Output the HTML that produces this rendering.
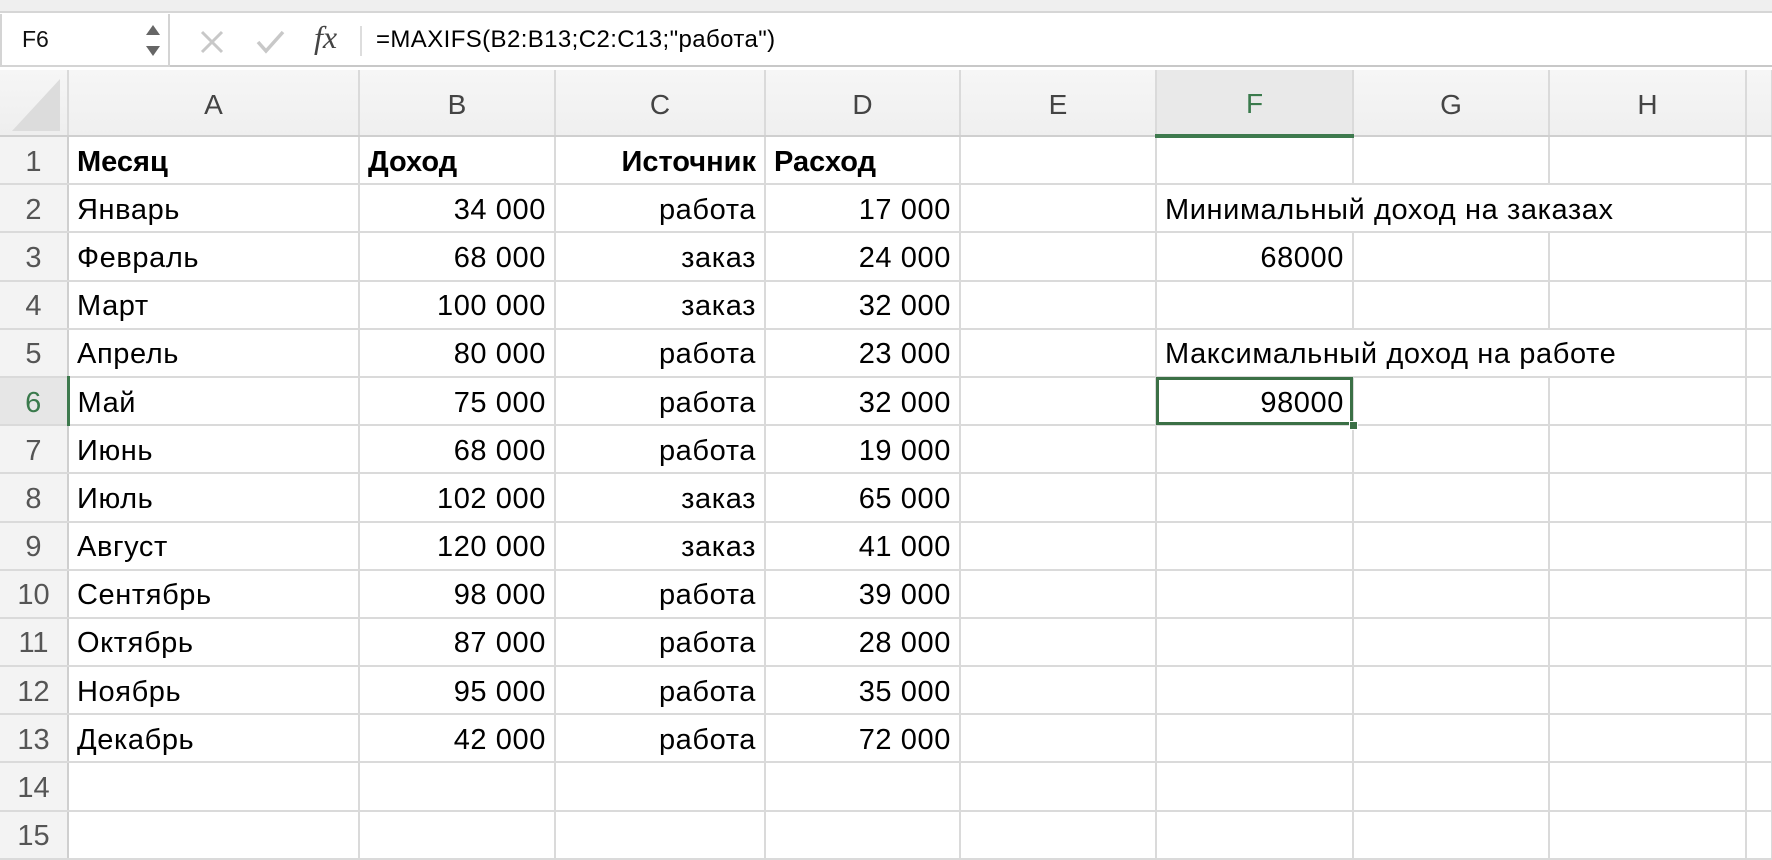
<!DOCTYPE html>
<html><head><meta charset="utf-8"><style>
*{margin:0;padding:0;box-sizing:border-box}
body{width:1772px;height:828px;overflow:hidden;background:#fff;font-family:"Liberation Sans",sans-serif;position:relative}
.top{position:absolute;left:0;top:0;width:1772px;height:13px;background:#efefef;border-bottom:2px solid #d6d6d6}
.fbar{position:absolute;left:0;top:14px;width:1772px;height:53px;background:#fff;border-bottom:2px solid #c8c8c8}
.name{position:absolute;left:0;top:0;width:170px;height:53px;border:2px solid #d4d4d4;border-top:none;font-size:23px;padding:12px 0 0 20px;color:#111}
table{position:absolute;left:0;top:70px;width:1772px;border-collapse:collapse;table-layout:fixed}
td{border-right:2px solid #dadada;border-bottom:2px solid #dadada;height:48.2px;font-size:29px;letter-spacing:0.6px;white-space:nowrap;overflow:visible;padding:0 8px;color:#000;vertical-align:middle;padding-top:4px}
tr.h td{height:66px;background:linear-gradient(#f6f6f6,#efefef);text-align:center;color:#444;font-size:28px;letter-spacing:0;border-bottom:2px solid #cfcfcf}
td.rh{background:#f3f3f3;text-align:center;color:#555;padding:4px 0 0 0;border-right:2px solid #cfcfcf;letter-spacing:0}
.r{text-align:right}
.b{font-weight:bold;letter-spacing:0}
</style></head><body>
<div class="top"></div>
<div class="fbar">
<div class="name">F6</div>
<svg style="position:absolute;left:145px;top:10px" width="16" height="34"><path d="M1 11 L8 1 L15 11Z" fill="#666"/><path d="M1 22 L15 22 L8 32Z" fill="#666"/></svg>
<svg style="position:absolute;left:200px;top:16px" width="24" height="24"><path d="M2 2 L22 22 M22 2 L2 22" stroke="#c8c8c8" stroke-width="3"/></svg>
<svg style="position:absolute;left:256px;top:16px" width="30" height="24"><path d="M2 12 L10 21 L27 2" stroke="#c8c8c8" stroke-width="3.5" fill="none"/></svg>
<div style="position:absolute;left:314px;top:5px;font-family:'Liberation Serif',serif;font-style:italic;font-size:32px;color:#444">fx</div>
<div style="position:absolute;left:360px;top:12px;width:2px;height:30px;background:#ddd"></div>
<div style="position:absolute;left:376px;top:12px;font-size:24px;letter-spacing:0.4px;color:#000">=MAXIFS(B2:B13;C2:C13;"работа")</div>
</div>
<table>
<colgroup><col style="width:68px"><col style="width:291px"><col style="width:196px"><col style="width:210px"><col style="width:195px"><col style="width:196px"><col style="width:197px"><col style="width:196px"><col style="width:197px"><col style="width:26px"></colgroup>
<tr class="h"><td style="background:linear-gradient(#f6f6f6,#eee);padding:0"><svg width="52" height="56" style="display:block;margin:4px 0 0 10px"><path d="M50 2 L50 54 L2 54Z" fill="#dcdcdc"/></svg></td><td>A</td><td>B</td><td>C</td><td>D</td><td>E</td><td style="background:#e9e9e9;color:#3a7a4c;border-bottom:4px solid #3e7a4e">F</td><td>G</td><td>H</td><td></td></tr>
<tr><td class="rh">1</td><td class="b">Месяц</td><td class="b">Доход</td><td class="b r">Источник</td><td class="b">Расход</td><td></td><td></td><td></td><td></td><td></td></tr>
<tr><td class="rh">2</td><td>Январь</td><td class="r">34 000</td><td class="r">работа</td><td class="r">17 000</td><td></td><td colspan="3">Минимальный доход на заказах</td><td></td></tr>
<tr><td class="rh">3</td><td>Февраль</td><td class="r">68 000</td><td class="r">заказ</td><td class="r">24 000</td><td></td><td class="r">68000</td><td></td><td></td><td></td></tr>
<tr><td class="rh">4</td><td>Март</td><td class="r">100 000</td><td class="r">заказ</td><td class="r">32 000</td><td></td><td></td><td></td><td></td><td></td></tr>
<tr><td class="rh">5</td><td>Апрель</td><td class="r">80 000</td><td class="r">работа</td><td class="r">23 000</td><td></td><td colspan="3">Максимальный доход на работе</td><td></td></tr>
<tr><td class="rh" style="background:#e6e6e6;color:#3a7a4c;border-right:3px solid #3e7a4e">6</td><td>Май</td><td class="r">75 000</td><td class="r">работа</td><td class="r">32 000</td><td></td><td class="r" style="outline:3px solid #3b7046;outline-offset:-3px;position:relative">98000<div style="position:absolute;right:-6px;bottom:-6px;width:9px;height:9px;background:#3b7046;border:1px solid #fff"></div></td><td></td><td></td><td></td></tr>
<tr><td class="rh">7</td><td>Июнь</td><td class="r">68 000</td><td class="r">работа</td><td class="r">19 000</td><td></td><td></td><td></td><td></td><td></td></tr>
<tr><td class="rh">8</td><td>Июль</td><td class="r">102 000</td><td class="r">заказ</td><td class="r">65 000</td><td></td><td></td><td></td><td></td><td></td></tr>
<tr><td class="rh">9</td><td>Август</td><td class="r">120 000</td><td class="r">заказ</td><td class="r">41 000</td><td></td><td></td><td></td><td></td><td></td></tr>
<tr><td class="rh">10</td><td>Сентябрь</td><td class="r">98 000</td><td class="r">работа</td><td class="r">39 000</td><td></td><td></td><td></td><td></td><td></td></tr>
<tr><td class="rh">11</td><td>Октябрь</td><td class="r">87 000</td><td class="r">работа</td><td class="r">28 000</td><td></td><td></td><td></td><td></td><td></td></tr>
<tr><td class="rh">12</td><td>Ноябрь</td><td class="r">95 000</td><td class="r">работа</td><td class="r">35 000</td><td></td><td></td><td></td><td></td><td></td></tr>
<tr><td class="rh">13</td><td>Декабрь</td><td class="r">42 000</td><td class="r">работа</td><td class="r">72 000</td><td></td><td></td><td></td><td></td><td></td></tr>
<tr><td class="rh">14</td><td></td><td></td><td></td><td></td><td></td><td></td><td></td><td></td><td></td></tr>
<tr><td class="rh">15</td><td></td><td></td><td></td><td></td><td></td><td></td><td></td><td></td><td></td></tr>
</table>
</body></html>
